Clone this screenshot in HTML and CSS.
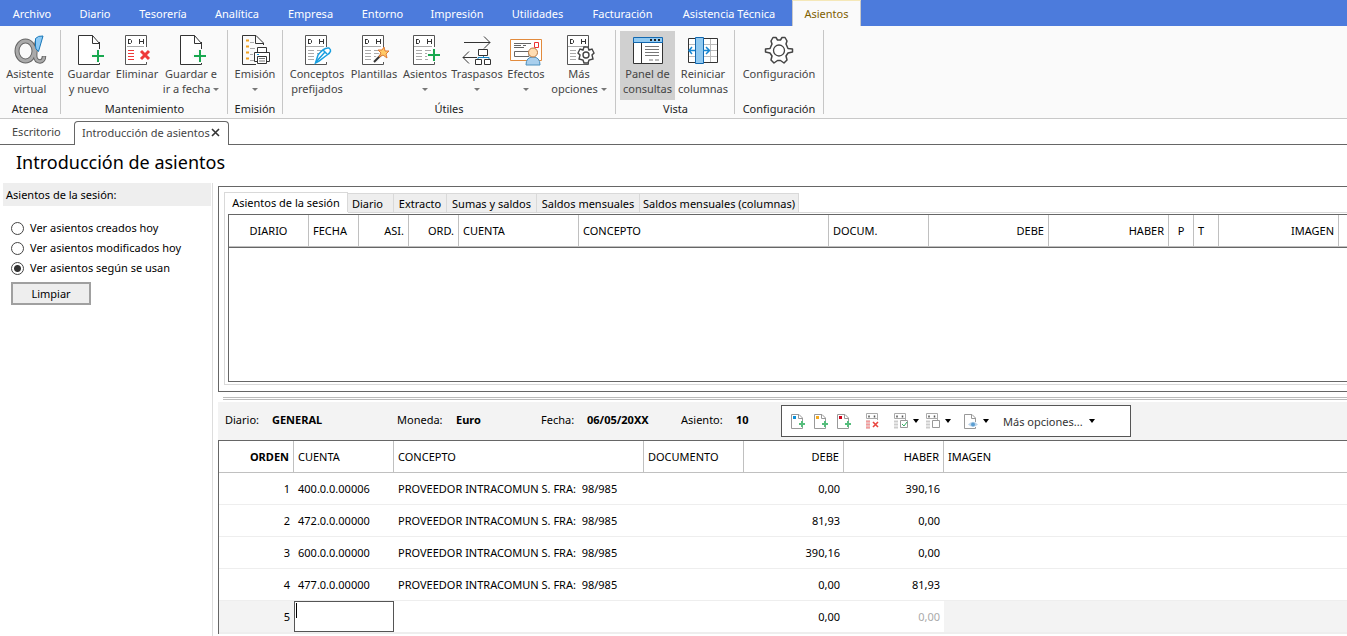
FILE: index.html
```html
<!DOCTYPE html>
<html lang="es">
<head>
<meta charset="utf-8">
<title>Introducción de asientos</title>
<link rel="stylesheet" href="styles.css">
</head>
<body>
<svg class="defs" width="0" height="0" aria-hidden="true">
  <defs>
    <g id="page" fill="none" stroke="#333"><path d="M27.500 7V29.500H6.500V.5H20.500L27.500 8.500H20.500V.5" fill="#fff"/></g>
    <g id="plus" fill="none" stroke="#18a84f" stroke-width="2"><path d="M20 21H32M26 15V27"/></g>
    <g id="ledger" fill="none" stroke="#555">
      <path d="M5.500 .5H26.500V29.500H5.500Z" fill="#fff" stroke="none"/>
      <path d="M26.500 12V.5H5.500V29.500H26.500V27"/>
      <path d="M8.500 4V9M8 4.500H10.500L11.500 5.500V7.500L10.500 8.500H8M19.500 4V9M23.500 4V9M20 6.500H23" stroke="#333"/>
    </g>
    <g id="rows" fill="none" stroke="#aaa"><path d="M6 11.500H24M8 15.500H14M8 18.500H14M8 21.500H14M8 24.500H14M17 15.500H23M17 18.500H23M17 21.500H22M17 24.500H20"/></g>
    <g id="minipage" fill="none" stroke="#999"><path d="M12.500 10V6L9 2.500H1.500V16.500H12.500V15M8.500 2.500V6.500H12"/></g>
    <g id="miniplus" fill="none" stroke="#55bd7c" stroke-width="2"><path d="M9 12H15M12 9V15"/></g>
    <g id="miniledger" fill="none" stroke="#aaa"><path d="M12.500 8V1.500H1.500V6.500H12"/><path d="M4 3.500V5.500M9.500 3.500V5.500" stroke="#555" stroke-width="1.500"/><path d="M1 9.500H5M1 12.500H5M1 15.500H5" stroke-width="2" stroke="#ccc"/></g>
  </defs>
</svg>
<nav class="menu">
  <a href="#" class="m-archivo">Archivo</a><a href="#" class="m-diario">Diario</a><a href="#" class="m-tesoreria">Tesorería</a><a href="#" class="m-analitica">Analítica</a><a href="#" class="m-empresa">Empresa</a><a href="#" class="m-entorno">Entorno</a><a href="#" class="m-impresion">Impresión</a><a href="#" class="m-utilidades">Utilidades</a><a href="#" class="m-facturacion">Facturación</a><a href="#" class="m-asistencia">Asistencia Técnica</a><a href="#" class="m-asientos active">Asientos</a>
</nav>
<header class="ribbon">
  <section class="group g-atenea">
    <div class="tools">
      <button><svg width="34" height="32" viewBox="0 0 34 32"><ellipse cx="12.500" cy="16" rx="8.500" ry="10" fill="none" stroke="#666" stroke-width="5"/><path d="M24 6C22 18 20 26 27 26.500Q31 26 31 21" fill="none" stroke="#666" stroke-width="4.500"/><ellipse cx="12.500" cy="16" rx="8.500" ry="10" fill="none" stroke="#aaa" stroke-width="3"/><path d="M24 6C22 18 20 26 27 26.500Q31 26 31 21.500" fill="none" stroke="#aaa" stroke-width="2.500"/><path d="M22.500 3.500Q25 .5 30 1L25.500 16.500Q22 14 22.500 11Z" fill="#8dcaf5" stroke="#1877b8"/></svg><span>Asistente<br>virtual</span></button>
    </div>
    <h2>Atenea</h2>
  </section>
  <section class="group g-mant">
    <div class="tools">
      <button class="b-guardar"><svg width="34" height="32" viewBox="0 0 34 32"><use href="#page"/><path d="M18 21H33M26 14V28" stroke="#fafafa" stroke-width="5"/><use href="#plus"/></svg><span>Guardar<br>y nuevo</span></button>
      <button class="b-eliminar"><svg width="34" height="32" viewBox="0 0 34 32"><use href="#ledger"/><path d="M7 11.500H24" stroke="#aaa"/><path d="M8 15.500H14M8 18.500H14M8 21.500H14M8 24.500H14" stroke="#ee3939"/><path d="M21 16L29 24M29 16L21 24" stroke="#ee3939" stroke-width="3"/></svg><span>Eliminar</span></button>
      <button class="b-fecha"><svg width="34" height="32" viewBox="0 0 34 32"><use href="#page"/><path d="M18 21H33M26 14V28" stroke="#fafafa" stroke-width="5"/><use href="#plus"/></svg><span>Guardar e<br>ir a fecha <i class="arrow"></i></span></button>
    </div>
    <h2>Mantenimiento</h2>
  </section>
  <section class="group g-emision">
    <div class="tools">
      <button><svg width="34" height="32" viewBox="0 0 34 32"><path d="M25.500 10V8L18 .5H4.500V29.500H18M17.500 .5V8.500H25" fill="none" stroke="#333"/><path d="M8 5.500H11M8 11.500H11M8 17.500H11M8 23.500H11" stroke="#f0a020" stroke-width="2"/><path d="M12 7.500H16M12 13.500H17M12 19.500H15M12 25.500H17" stroke="#aaa"/><path d="M19.500 17V12.500H28.500V17M19 26.500H16.500V17.500H31.500V26.500H28M19.500 21.500H28.500V28.500H19.500Z" fill="#fff" stroke="#333"/><path d="M21 23.500H27M21 26H27" stroke="#777"/><path d="M19 19.500H21" stroke="#189de0"/></svg><span>Emisión<br><i class="arrow"></i></span></button>
    </div>
    <h2>Emisión</h2>
  </section>
  <section class="group g-utiles">
    <div class="tools">
      <button class="b-conceptos"><svg width="34" height="32" viewBox="0 0 34 32"><use href="#ledger"/><use href="#rows"/><path d="M15.500 28L18 20Q24 12 29 13Q33 16 27 20L19 26Z" fill="#fff" stroke="#189fe0" stroke-width="1.500"/><path d="M16 27L25 17M23 15L27 19" stroke="#189fe0" stroke-width="1.500"/></svg><span>Conceptos<br>prefijados</span></button>
      <button class="b-plantillas"><svg width="34" height="32" viewBox="0 0 34 32"><use href="#ledger"/><use href="#rows"/><path d="M17 27L25 19" stroke="#fafafa" stroke-width="5"/><path d="M17 27L25 19" stroke="#333" stroke-width="2"/><path d="M27 12L28 16L32 16L29 19L30 23L26 20L22 22L24 18L21 15L25 15Z" fill="#ffc966" stroke="#df7934"/></svg><span>Plantillas</span></button>
      <button class="b-asientos"><svg width="34" height="32" viewBox="0 0 34 32"><use href="#ledger"/><use href="#rows"/><path d="M26 13V27M19 20H33" stroke="#fafafa" stroke-width="4"/><path d="M20 20H32M26 14V26" stroke="#18a84f" stroke-width="2"/></svg><span>Asientos<br><i class="arrow"></i></span></button>
      <button class="b-traspasos"><svg width="34" height="32" viewBox="0 0 34 32"><path d="M4 7.500H30M24 1.500L30 7.500L24 13.500M17 22.500H3M9 16.500L3 22.500L9 28.500" fill="none" stroke="#333"/><path d="M23.500 20V22.500M18 24V22.500H29V24" fill="none" stroke="#1785c5"/><path d="M18.500 14.500H27.500V20.500H18.500ZM15.500 24.500H21.500V29.500H15.500ZM24.500 24.500H30.500V29.500H24.500Z" fill="#fff" stroke="#333"/></svg><span>Traspasos<br><i class="arrow"></i></span></button>
      <button class="b-efectos"><svg width="34" height="32" viewBox="0 0 34 32"><path d="M1.500 4.500H32.500V25.500H1.500Z" fill="#fff" stroke="#e28b3d"/><path d="M5 8.500H22M5 10.500H12M14 10.500H17M5 12.500H15" stroke="#666"/><path d="M5.500 16.500H20V21.500H5.500Z" fill="none" stroke="#666"/><path d="M25.500 7.500H29.500V12.500H25.500Z" fill="none" stroke="#e33"/><path d="M17 30Q17 22 24 22Q31 22 31 30Z" fill="#a9cfed" stroke="#4c90be"/><circle cx="24" cy="17.500" r="4.500" fill="#ffddb2" stroke="#b97842"/></svg><span>Efectos<br><i class="arrow"></i></span></button>
      <button class="b-mas"><svg width="34" height="32" viewBox="0 0 34 32"><use href="#ledger"/><use href="#rows"/><path d="M22 12H26L27 15L30 14L32 18L30 20L31 24L27 25L26 28H22L21 25L17 24L18 20L16 18L18 14L21 15Z" fill="#fff" stroke="#444" stroke-width="1.400"/><circle cx="24" cy="20" r="3" fill="#fff" stroke="#444" stroke-width="1.400"/></svg><span>Más<br>opciones <i class="arrow"></i></span></button>
    </div>
    <h2>Útiles</h2>
  </section>
  <section class="group g-vista">
    <div class="tools">
      <button class="b-panel pressed"><svg width="34" height="32" viewBox="0 0 34 32"><path d="M2.500 3.500H31.500V28.500H2.500Z" fill="#fff" stroke="#333"/><path d="M2.500 2.500H31.500V7.500H2.500Z" fill="#91c9f0" stroke="#1268b0"/><path d="M10.500 8V28" stroke="#333"/><path d="M19 5H21M23 5H25M27 5H29" stroke="#222" stroke-width="2"/><path d="M14 11.500H28M14 14.500H28M14 17.500H28M14 20.500H28M18 25H22M24 25H28" stroke="#777"/></svg><span>Panel de<br>consultas</span></button>
      <button class="b-reiniciar"><svg width="34" height="32" viewBox="0 0 34 32"><path d="M2.500 3.500H31.500V27.500H2.500Z" fill="#fff" stroke="#333"/><path d="M3 9.500H31M3 15.500H31M3 21.500H31M24.500 4V27" stroke="#bbb"/><path d="M9.500 2.500H17.500V28.500H9.500Z" fill="#91c9f0" stroke="#1268b0"/><path d="M9 15.500H3M6 12L3 15.500L6 19M17 15.500H23M20 12L23.500 15.500L20 19" fill="none" stroke="#1685d0" stroke-width="1.500"/></svg><span>Reiniciar<br>columnas</span></button>
    </div>
    <h2>Vista</h2>
  </section>
  <section class="group g-config">
    <div class="tools">
      <button><svg width="34" height="32" viewBox="0 0 34 32"><path d="M11 2.500H14L15.500 5H18.500L20 2.500H23L25 6L24 9L26 13.500L30.500 14V17L26 18L24 21L25 25L22 28L18.500 25.500H15.500L12 28L9 25L10 21L8 18L3.500 17V14L8 13.500L10 9L9 6Z" fill="#fff" stroke="#444" stroke-width="1.500" stroke-linejoin="round"/><circle cx="17" cy="15.500" r="5.500" fill="#fff" stroke="#444" stroke-width="1.300"/></svg><span>Configuración</span></button>
    </div>
    <h2>Configuración</h2>
  </section>
</header>
<div class="doc-tabs">
  <a href="#" class="doc-tab">Escritorio</a>
  <div class="doc-tab current">Introducción de asientos <button aria-label="Cerrar"><svg width="9" height="9" viewBox="0 0 9 9"><path d="M1 1L8 8M8 1L1 8" stroke="#333" stroke-width="1.600"/></svg></button></div>
  <div class="doc-rest"></div>
</div>
<h1>Introducción de asientos</h1>
<div class="workspace">
  <aside>
    <h3>Asientos de la sesión:</h3>
    <div class="filters">
      <label><input type="radio" name="ver"><span>Ver asientos creados hoy</span></label>
      <label><input type="radio" name="ver"><span>Ver asientos modificados hoy</span></label>
      <label><input type="radio" name="ver" checked><span>Ver asientos según se usan</span></label>
      <button>Limpiar</button>
    </div>
  </aside>
  <main>
    <section class="session">
      <div class="session-tabs">
        <button class="t1 on">Asientos de la sesión</button><button class="t2">Diario</button><button class="t3">Extracto</button><button class="t4">Sumas y saldos</button><button class="t5">Saldos mensuales</button><button class="t6">Saldos mensuales (columnas)</button>
      </div>
      <div class="session-frame">
        <div class="session-grid">
          <table>
            <colgroup><col class="w80"><col class="w50"><col class="w50"><col class="w50"><col class="w120"><col class="w250"><col class="w100"><col class="w120"><col class="w120"><col class="w25"><col class="w25"><col class="w120"><col></colgroup>
            <thead><tr><th class="c">DIARIO</th><th>FECHA</th><th class="r">ASI.</th><th class="r">ORD.</th><th>CUENTA</th><th>CONCEPTO</th><th>DOCUM.</th><th class="r">DEBE</th><th class="r">HABER</th><th class="c">P</th><th>T</th><th class="r">IMAGEN</th><th></th></tr></thead>
          </table>
        </div>
      </div>
    </section>
    <div class="splitter"></div>
    <section class="entry">
      <div class="entry-head">
        <div class="fields">
          <span>Diario:</span><b>GENERAL</b><span>Moneda:</span><b>Euro</b><span>Fecha:</span><b>06/05/20XX</b><span>Asiento:</span><b>10</b>
        </div>
        <div class="toolbar">
          <button aria-label="Nuevo azul"><svg width="16" height="18" viewBox="0 0 16 18"><use href="#minipage"/><path d="M3 4H6V7H3Z" fill="#0b8fd8"/><use href="#miniplus"/></svg></button>
          <button aria-label="Nuevo amarillo"><svg width="16" height="18" viewBox="0 0 16 18"><use href="#minipage"/><path d="M3 4H6V7H3Z" fill="#f4a91c"/><use href="#miniplus"/></svg></button>
          <button aria-label="Nuevo rojo"><svg width="16" height="18" viewBox="0 0 16 18"><use href="#minipage"/><path d="M3 4H6V7H3Z" fill="#d0021b"/><use href="#miniplus"/></svg></button>
          <button class="del" aria-label="Borrar"><svg width="16" height="18" viewBox="0 0 16 18"><use href="#miniledger"/><path d="M1 9.500H5M1 12.500H5M1 15.500H5" stroke="#f49a9a" stroke-width="2"/><path d="M8 10L13 15M13 10L8 15" stroke="#e9453f" stroke-width="1.600"/></svg></button>
          <button class="drop chk" aria-label="Marcar"><svg width="16" height="18" viewBox="0 0 16 18"><use href="#miniledger"/><path d="M7.500 8.500H14.500V15.500H7.500Z" fill="#fff" stroke="#999"/><path d="M9 12L11 14L14 10" fill="none" stroke="#31ad60"/></svg><i class="arrow"></i></button>
          <button class="drop cpy" aria-label="Copiar"><svg width="16" height="18" viewBox="0 0 16 18"><use href="#miniledger"/><path d="M7.500 8.500H14.500V15.500H7.500Z" fill="#fff" stroke="#999"/></svg><i class="arrow"></i></button>
          <button class="drop eye" aria-label="Ver"><svg width="16" height="18" viewBox="0 0 16 18"><use href="#minipage"/><path d="M5 12.500Q10 7 15 12.500Q10 17 5 12.500" fill="#bbd4ea"/><circle cx="10" cy="12.500" r="2" fill="#5c9fd2"/></svg><i class="arrow"></i></button>
          <button class="more">Más opciones...<i class="arrow"></i></button>
        </div>
      </div>
      <table class="lines">
        <colgroup><col class="w75"><col class="w100"><col class="w250"><col class="w100"><col class="w100"><col class="w100"><col></colgroup>
        <thead><tr><th class="r strong">ORDEN</th><th>CUENTA</th><th>CONCEPTO</th><th>DOCUMENTO</th><th class="r">DEBE</th><th class="r">HABER</th><th>IMAGEN</th></tr></thead>
        <tbody>
          <tr><td class="r">1</td><td>400.0.0.00006</td><td>PROVEEDOR INTRACOMUN S. FRA:&nbsp; 98/985</td><td></td><td class="r">0,00</td><td class="r">390,16</td><td></td></tr>
          <tr><td class="r">2</td><td>472.0.0.00000</td><td>PROVEEDOR INTRACOMUN S. FRA:&nbsp; 98/985</td><td></td><td class="r">81,93</td><td class="r">0,00</td><td></td></tr>
          <tr><td class="r">3</td><td>600.0.0.00000</td><td>PROVEEDOR INTRACOMUN S. FRA:&nbsp; 98/985</td><td></td><td class="r">390,16</td><td class="r">0,00</td><td></td></tr>
          <tr><td class="r">4</td><td>477.0.0.00000</td><td>PROVEEDOR INTRACOMUN S. FRA:&nbsp; 98/985</td><td></td><td class="r">0,00</td><td class="r">81,93</td><td></td></tr>
          <tr class="editing"><td class="r shade">5</td><td class="edit"><input type="text" aria-label="Cuenta"></td><td></td><td></td><td class="r">0,00</td><td class="r dim">0,00</td><td class="shade"></td></tr>
        </tbody>
      </table>
    </section>
  </main>
</div>
</body>
</html>
```
FILE: styles.css
```css
* { box-sizing: border-box; }
body { margin: 0; min-height: 100vh; display: flex; flex-direction: column; overflow: hidden; background: #fff; color: #000; font: 11px/15px "Noto Sans", "Open Sans", sans-serif; }
button, input { font: inherit; color: inherit; }
button { border: 0; padding: 0; background: none; }
h1, h2, h3 { margin: 0; font-weight: 400; }
svg { display: block; flex: none; }
.defs { position: absolute; }
a { color: inherit; text-decoration: none; }

.menu { display: flex; height: 26px; background: #4c7bdc; color: #fff; line-height: 28px; text-align: center; white-space: nowrap; }
.menu a { flex: none; }
.menu .active { background: #fafafa; color: #806000; border: 1px solid #c9c9c9; border-top-color: #f5e8b8; border-bottom: 0; line-height: 26px; }
.m-archivo { width: 64px; } .m-diario { width: 62px; } .m-tesoreria { width: 74px; } .m-analitica { width: 74px; }
.m-empresa { width: 73px; } .m-entorno { width: 71px; } .m-impresion { width: 78px; } .m-utilidades { width: 83px; }
.m-facturacion { width: 87px; } .m-asistencia { width: 126px; } .m-asientos { width: 69px; }

.ribbon { display: flex; height: 93px; padding-top: 4px; background: #fafafa; border-bottom: 1px solid #c8c8c8; }
.group { display: flex; flex-direction: column; height: 84px; padding: 0 3px; border-right: 1px solid #c6c6c6; flex: none; }
.g-atenea { width: 61px; padding: 0 1px; } .g-mant { width: 167px; padding-left: 4px; } .g-emision { width: 55px; } .g-utiles { width: 333px; } .g-vista { width: 119px; padding-left: 4px; } .g-config { width: 89px; }
.tools { display: flex; flex: none; height: 71px; }
.tools button { flex: 1; display: flex; flex-direction: column; align-items: center; justify-content: flex-start; height: 69px; margin-top: 1px; padding-top: 4px; color: #444; white-space: nowrap; text-align: center; }
.tools svg { margin-bottom: -1px; }
.tools span { display: block; }
.tools .b-guardar { flex: 0 0 48px; } .tools .b-eliminar { flex: 0 0 48px; } .tools .b-fecha { flex: 0 0 60px; }
.tools .b-conceptos { flex: 0 0 62px; } .tools .b-plantillas { flex: 0 0 52px; } .tools .b-asientos { flex: 0 0 50px; }
.tools .b-traspasos { flex: 0 0 54px; } .tools .b-efectos { flex: 0 0 44px; } .tools .b-mas { flex: 0 0 62px; }
.tools .b-panel { flex: 0 0 55px; }
.tools .pressed { background: #d0d0d0; }
.group h2 { font-size: 11px; line-height: 15px; text-align: center; color: #222; }
.arrow { display: inline-block; border: 3px solid transparent; border-top-color: #777; border-bottom: 0; vertical-align: 2px; }

.doc-tabs { display: flex; height: 26px; color: #444; white-space: nowrap; }
.doc-tab, .doc-rest { border-bottom: 1px solid #666; }
.doc-tab { flex: none; width: 74px; padding-left: 12px; line-height: 26px; }
.doc-tab.current { display: flex; align-items: center; justify-content: space-between; width: 155px; margin-top: 2px; padding: 0 8px 2px 7px; border: 1px solid #666; border-bottom: 0; border-radius: 4px 4px 0 0; line-height: 20px; }
.doc-rest { flex: 1; }
h1 { height: 38px; padding-left: 16px; font-size: 18px; line-height: 34px; }

.workspace { flex: 1; display: flex; }
aside { flex: none; width: 213px; padding-left: 3px; border-right: 1px solid #ddd; }
h3 { margin-right: 1px; padding: 4px 3px; background: #eee; font-size: 11px; line-height: 15px; }
.filters { display: flex; flex-direction: column; align-items: flex-start; padding: 12px 8px; }
.filters label { display: flex; align-items: center; height: 20px; gap: 6px; }
.filters span { padding-bottom: 2px; }
.filters input { appearance: none; width: 13px; height: 13px; margin: 0; border: 1px solid #444; border-radius: 50%; background: #fff; }
.filters input:checked { background: radial-gradient(circle, #333 3px, #fff 4px); }
.filters button { width: 80px; height: 23px; margin-top: 4px; background: #eee; border: 2px solid #a0a0a0; }

main { flex: 1; min-width: 0; padding: 3px 0 0 5px; display: flex; flex-direction: column; }
.session { display: flex; flex-direction: column; height: 206px; padding: 5px 0 6px 5px; border: 1px solid #666; border-right: 0; }
.session-tabs { display: flex; align-items: flex-end; height: 20px; white-space: nowrap; }
.session-tabs button { height: 19px; background: #eee; border: 1px solid #d9d9d9; border-width: 1px 1px 0 0; }
.session-tabs .on { height: 20px; background: #fff; border-left-width: 1px; }
.t1 { width: 124px; } .t2 { width: 46px; padding-right: 6px; } .t3 { width: 53px; } .t4 { width: 90px; } .t5 { width: 103px; } .t6 { width: 159px; }
.session-frame { flex: 1; padding: 2px 0 2px 3px; border-left: 1px solid #d9d9d9; border-bottom: 1px solid #d9d9d9; background: linear-gradient(#d9d9d9, #d9d9d9) 123px 0 / 100% 1px no-repeat; }
.session-grid { height: 100%; border: 1px solid #666; border-right: 0; background: #fff; overflow: hidden; }
.session-grid table { border-bottom: 1px solid #666; }
table { width: 100%; table-layout: fixed; border-collapse: separate; border-spacing: 0; }
th, td { height: 32px; padding: 0 4px; text-align: left; font-weight: 400; white-space: nowrap; overflow: hidden; }
th { padding-bottom: 1px; border-right: 1px solid #c0c0c0; border-bottom: 1px solid #c0c0c0; }
.r { text-align: right; } .c { text-align: center; } .strong { font-weight: 700; }
.w25 { width: 25px; } .w50 { width: 50px; } .w75 { width: 75px; } .w80 { width: 80px; } .w100 { width: 100px; } .w120 { width: 120px; } .w250 { width: 250px; }
th:last-child { border-right: 0; }

.splitter { height: 3px; margin: 5px 0 2px 5px; border-top: 1px solid #bbb; border-bottom: 1px solid #bbb; }
.entry-head { display: flex; align-items: center; height: 38px; background: #f3f3f3; }
.fields { display: grid; grid-template-columns: 47px 125px 59px 85px 46px 94px 55px 45px; padding: 0 0 3px 7px; white-space: nowrap; }
.toolbar { display: flex; align-items: center; width: 350px; height: 32px; padding-left: 8px; border: 1px solid #555; background: #fff; white-space: nowrap; }
.toolbar button { flex: none; width: 23px; }
.toolbar .del { width: 34px; padding-left: 6px; }
.toolbar .drop { display: flex; align-items: center; gap: 4px; width: 32px; }
.toolbar .drop.cpy { width: 38px; }
.toolbar .arrow { border-top-color: #000; border-width: 4px 3px 0; }
.toolbar .more { display: flex; align-items: center; gap: 6px; width: auto; padding-left: 8px; color: #333; }
.lines { border-top: 1px solid #666; border-left: 1px solid #666; }
.lines td { border-bottom: 1px solid #eee; }
.lines .editing td { border-bottom: 2px solid #eee; height: 33px; }
.lines .shade { background: #f3f3f3; }
.lines .dim { color: #aaa; }
.lines .edit { padding: 0; }
.edit input { display: block; width: 100%; height: 31px; padding: 0 4px; border: 1px solid #555; border-radius: 0; outline: 0; background: linear-gradient(#000, #000) 1px 1px / 1px 15px no-repeat #fff; }
```
